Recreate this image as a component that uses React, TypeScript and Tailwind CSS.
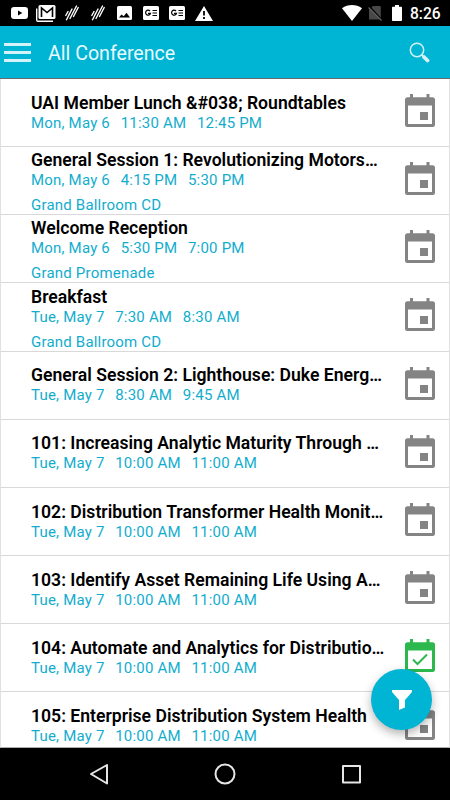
import { clsx } from 'clsx';

interface Session {
  title: string;
  day: string;
  start: string;
  end: string;
  place?: string;
  added?: boolean;
}

const sessions: Session[] = [
  { title: 'UAI Member Lunch &#038; Roundtables', day: 'Mon, May 6', start: '11:30 AM', end: '12:45 PM' },
  { title: 'General Session 1: Revolutionizing Motors…', day: 'Mon, May 6', start: '4:15 PM', end: '5:30 PM', place: 'Grand Ballroom CD' },
  { title: 'Welcome Reception', day: 'Mon, May 6', start: '5:30 PM', end: '7:00 PM', place: 'Grand Promenade' },
  { title: 'Breakfast', day: 'Tue, May 7', start: '7:30 AM', end: '8:30 AM', place: 'Grand Ballroom CD' },
  { title: 'General Session 2: Lighthouse: Duke Energ…', day: 'Tue, May 7', start: '8:30 AM', end: '9:45 AM' },
  { title: '101: Increasing Analytic Maturity Through …', day: 'Tue, May 7', start: '10:00 AM', end: '11:00 AM' },
  { title: '102: Distribution Transformer Health Monit…', day: 'Tue, May 7', start: '10:00 AM', end: '11:00 AM' },
  { title: '103: Identify Asset Remaining Life Using A…', day: 'Tue, May 7', start: '10:00 AM', end: '11:00 AM' },
  { title: '104: Automate and Analytics for Distributio…', day: 'Tue, May 7', start: '10:00 AM', end: '11:00 AM', added: true },
  { title: '105: Enterprise Distribution System Health', day: 'Tue, May 7', start: '10:00 AM', end: '11:00 AM' },
];

function CalendarIcon({ added }: { added?: boolean }) {
  return (
    <svg viewBox="0 0 30 33" className={clsx('w-[30px] h-[33px] mb-[4px] shrink-0', added ? 'text-[#2db84d]' : 'text-[#848484]')}>
      <path
        fill="currentColor"
        fillRule="evenodd"
        d="M5 0h3v3.300h13.500V0h3v3.300H27.500a2.500 2.500 0 0 1 2.500 2.500V30.500a2.500 2.500 0 0 1-2.500 2.500H2.500A2.500 2.500 0 0 1 0 30.500V5.800a2.500 2.500 0 0 1 2.500-2.500H5zM3 11.500V30h24V11.500z"
      />
      {added ? (
        <path d="M8 20.500l4.500 4.500 9.500-9.500" fill="none" stroke="currentColor" strokeWidth="2" />
      ) : (
        <path d="M15 18h8v8h-8z" fill="currentColor" />
      )}
    </svg>
  );
}

function StrokesIcon() {
  return (
    <svg viewBox="0 0 14 16" className="w-3.5 h-4" fill="none" stroke="#fff" strokeWidth="1.400" strokeLinecap="round">
      <path d="M.8 10.500l2.200-4M1.500 14.800L7 4M5 13.500L11.500 1M8.500 11.500l4.700-9M3.800 10l1-1.800" />
    </svg>
  );
}

function NewsIcon() {
  return (
    <svg viewBox="0 0 16 14" className="w-4 h-3.5">
      <rect width="16" height="14" rx="1.500" fill="#fff" />
      <path d="M7 5a2.500 2.500 0 1 0 .5 2.300H5M9.500 4.500H14M9.500 7H14M9.500 9.500H14" fill="none" stroke="#000" strokeWidth="1.200" />
    </svg>
  );
}

function StatusBar() {
  return (
    <header className="h-[26px] shrink-0 bg-black flex items-center justify-between pl-[11px] pr-[9px]">
      <div className="flex items-center">
        <svg viewBox="0 0 17 12" className="w-[17px] h-3">
          <rect width="17" height="12" rx="3" fill="#fff" />
          <path d="M7 3.500v5l4.300-2.500z" fill="#000" />
        </svg>
        <svg viewBox="0 0 20 17" className="w-5 h-[17px] ml-2">
          <path d="M.7 3.500V15A1.300 1.300 0 0 0 2 16.300h15" fill="none" stroke="#fff" strokeWidth="1.400" />
          <rect x="2.500" y="0" width="17" height="14" rx="1.500" fill="#fff" />
          <path d="M5.500 12V3l5.500 4.500L16.500 3v9" fill="none" stroke="#000" strokeWidth="1.600" />
        </svg>
        <div className="ml-[9px] flex gap-3">
          <StrokesIcon />
          <StrokesIcon />
        </div>
        <svg viewBox="0 0 15 14" className="w-[15px] h-3.5 ml-3">
          <rect width="15" height="14" rx="1.500" fill="#fff" />
          <path d="M2 11.500l2.500-3 2.200 1.800 2.800-3.500 3.500 4.700z" fill="#000" />
        </svg>
        <div className="ml-[11px] flex gap-2.5">
          <NewsIcon />
          <NewsIcon />
        </div>
        <svg viewBox="0 0 18 15" className="w-[18px] h-[15px] ml-2.5">
          <path d="M9 0l9 15H0z" fill="#fff" />
          <path d="M9 5v4.500M9 11v2" stroke="#000" strokeWidth="1.800" />
        </svg>
      </div>
      <div className="flex items-center">
        <svg viewBox="0 0 20 16" className="w-5 h-4">
          <path d="M0 3.300C6-1.100 14-1.100 20 3.300L10 16z" fill="#fff" />
        </svg>
        <svg viewBox="0 0 15 16" className="w-[15px] h-4 ml-1.5">
          <path d="M5 1h6.500a1.300 1.300 0 0 1 1.300 1.300V14.500H1V5z" fill="#484848" />
          <path d="M1.500 1.500l13 14" stroke="#000" strokeWidth="1.500" />
          <path d="M.5 2.500l13 13" stroke="#606060" strokeWidth="1.300" />
        </svg>
        <svg viewBox="0 0 10 16" className="w-2.5 h-4 ml-[9px]">
          <path d="M3 0h4v1.700h2.200a.8.800 0 0 1 .8.800V15.200a.8.800 0 0 1-.8.800H.8a.8.800 0 0 1-.8-.8V2.500a.8.800 0 0 1 .8-.8H3z" fill="#fff" />
        </svg>
        <span className="ml-2 mt-[3px] w-[31px] whitespace-nowrap text-[15.600px] font-medium leading-none text-white">8:26</span>
      </div>
    </header>
  );
}

function TitleBar() {
  return (
    <div className="h-[53px] shrink-0 bg-[#00b4d4] border-b border-[#656b6e] flex items-center pl-1 pr-[20px]">
      <div className="w-[27px] flex flex-col gap-[5px]">
        <div className="h-[3px] bg-[#d3f3f9]" />
        <div className="h-[3px] bg-[#d3f3f9]" />
        <div className="h-[3px] bg-[#d3f3f9]" />
      </div>
      <h1 className="ml-[17px] flex-1 text-[19.600px] leading-[24px] text-[#eafaff] pt-[3px]">All Conference</h1>
      <svg viewBox="0 0 21 21" className="w-[21px] h-[21px]" fill="none" stroke="#d3f3f9">
        <circle cx="8" cy="8" r="6.700" strokeWidth="1.500" />
        <path d="M12.600 12.600l2 2" strokeWidth="1.500" />
        <path d="M15 15l3.500 3.500" strokeWidth="3.800" strokeLinecap="round" />
      </svg>
    </div>
  );
}

function SessionRow({ session }: { session: Session }) {
  return (
    <li className="h-[68.150px] shrink-0 border-b border-[#d9d9d9] flex items-center pl-[30px] pr-[14px]">
      <div className={clsx('flex-1 min-w-0 whitespace-nowrap', session.place ? 'pt-[4px]' : 'pt-[0.300px]')}>
        <p className="text-[17.600px] leading-[20px] font-semibold text-black">{session.title}</p>
        <p className="flex gap-[10.700px] text-[15px] leading-[20px] tracking-[0.200px] text-[#12adcd]">
          <span>{session.day}</span>
          <span>{session.start}</span>
          <span>{session.end}</span>
        </p>
        {session.place && (
          <p className="mt-[5px] text-[15px] leading-[20px] tracking-[0.200px] text-[#12adcd]">{session.place}</p>
        )}
      </div>
      <CalendarIcon added={session.added} />
    </li>
  );
}

export default function App() {
  return (
    <div className="w-[450px] h-[800px] flex flex-col overflow-hidden bg-white font-['Roboto',sans-serif]">
      <StatusBar />
      <TitleBar />
      <main className="relative flex-1 min-h-0 overflow-hidden border-x border-b border-x-[#e0e0e0] border-b-[#aaa]">
        <ul className="flex flex-col">
          {sessions.map(s => (
            <SessionRow key={s.title} session={s} />
          ))}
        </ul>
        <button className="absolute right-[17px] bottom-[17px] size-[61px] rounded-full bg-[#00b4d4] shadow-[0_4px_10px_rgba(0,0,0,0.3)] flex items-center justify-center">
          <svg viewBox="0 0 20 20" className="size-5">
            <path d="M0 0h20v2l-7 8v7.500L7 20V10L0 2z" fill="#fff" />
          </svg>
        </button>
      </main>
      <nav className="h-[52px] shrink-0 bg-black">
        <svg viewBox="0 0 450 52" className="w-full h-full" fill="none" stroke="#e6e6e6" strokeWidth="2" strokeLinejoin="round">
          <path d="M107 17v18.500L91 26z" />
          <circle cx="225" cy="26" r="9.500" />
          <rect x="343" y="18" width="17" height="16.500" />
        </svg>
      </nav>
    </div>
  );
}
